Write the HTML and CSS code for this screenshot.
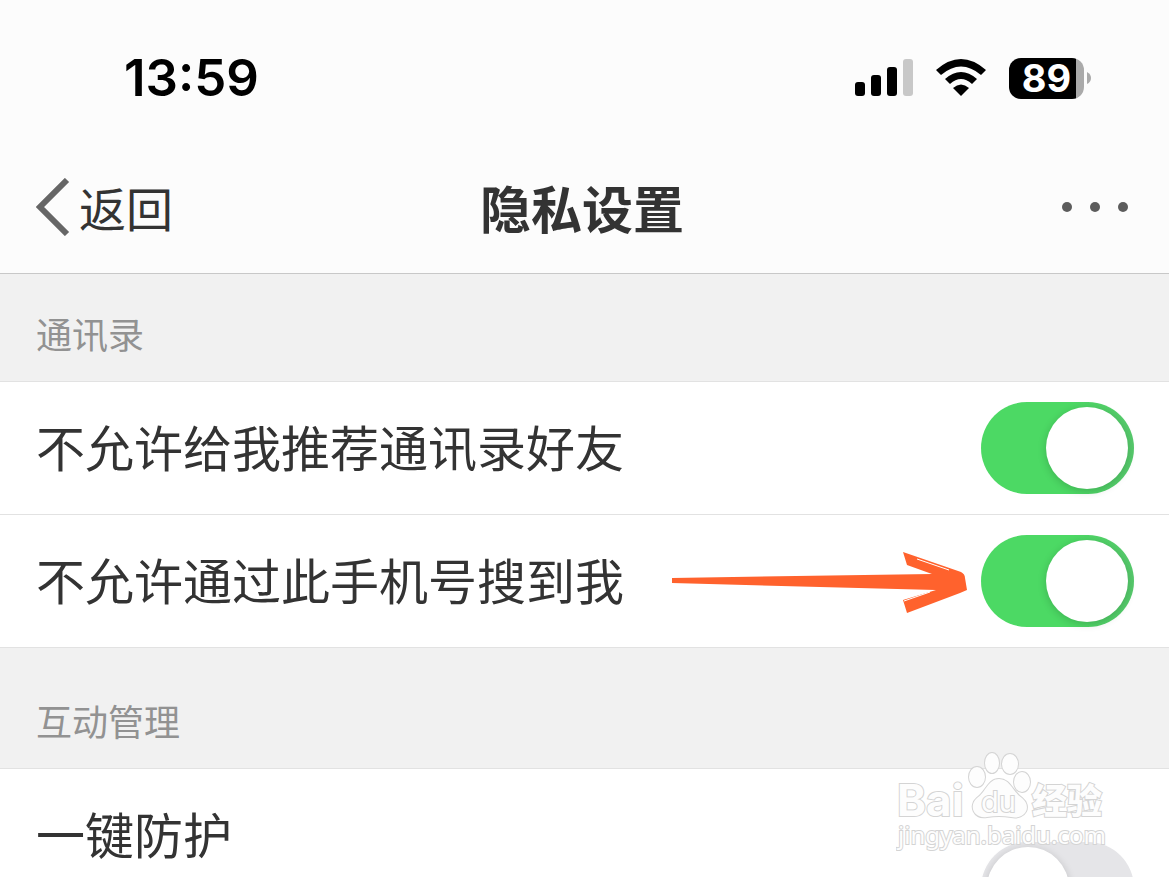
FILE: index.html
```html
<!DOCTYPE html>
<html lang="zh-CN">
<head>
<meta charset="utf-8">
<meta name="viewport" content="width=device-width, initial-scale=1">
<title>隐私设置</title>
<link rel="stylesheet" href="styles.css">
</head>
<body>
<div class="screen">
  <header class="header">
    <div class="status">
      <time class="clock">13:59</time>
      <div class="indicators">
        <svg class="signal" viewBox="0 0 58 38" aria-hidden="true">
          <rect x="0" y="23" width="10" height="14" rx="3"/>
          <rect x="16" y="16" width="10" height="21" rx="3"/>
          <rect x="32" y="8" width="10" height="29" rx="3"/>
          <rect class="muted" x="48" y="0" width="10" height="37" rx="3"/>
        </svg>
        <svg class="wifi" viewBox="0 0 50 38" aria-hidden="true">
          <path d="M0 11Q25-11 50 11L45 16Q25-1 5 16Z"/>
          <path d="M9 20Q25 6 41 20L36 25Q25 15 14 25Z"/>
          <path d="M17 29Q25 22 33 29L25 37Z"/>
        </svg>
        <div class="battery"><span class="battery-body">89</span><svg class="battery-cap" viewBox="0 0 4 12" aria-hidden="true"><path d="M0 0Q4 2 4 6T0 12Z"/></svg></div>
      </div>
    </div>
    <nav class="navbar">
      <button class="back" type="button">
        <svg class="chevron" viewBox="0 0 34 58" aria-hidden="true"><path d="M31 2L4 29L31 56"/></svg>
        <span>返回</span>
      </button>
      <h1 class="title">隐私设置</h1>
      <button class="more" type="button" aria-label="更多">
        <svg class="dots" viewBox="0 0 66 10" aria-hidden="true"><circle cx="5" cy="5" r="5"/><circle cx="33" cy="5" r="5"/><circle cx="61" cy="5" r="5"/></svg>
      </button>
    </nav>
  </header>
  <main>
    <h2 class="group">通讯录</h2>
    <div class="row">
      <label class="label" for="recommend">不允许给我推荐通讯录好友</label>
      <input class="switch" id="recommend" type="checkbox" role="switch" checked>
    </div>
    <div class="row">
      <label class="label" for="search">不允许通过此手机号搜到我</label>
      <svg class="arrow" viewBox="0 0 296 62" aria-hidden="true">
        <path d="M0 26L260 22L235 13L231 0L289 20Q293 22 293 26L295 38L288 41L235 61L231 48L264 38L0 31Z"/>
        <path class="scratch" d="M245 7L277 18M232 49L258 40"/>
      </svg>
      <input class="switch" id="search" type="checkbox" role="switch" checked>
    </div>
    <h2 class="group group-tall">互动管理</h2>
    <div class="row row-tall">
      <label class="label" for="protect">一键防护</label>
      <input class="switch" id="protect" type="checkbox" role="switch">
    </div>
  </main>
  <svg class="watermark" viewBox="0 0 214 106" aria-label="Baidu经验">
    <g class="outline">
      <text class="brand" x="1" y="65">Bai</text>
      <ellipse cx="81" cy="26" rx="8" ry="10"/>
      <ellipse cx="96" cy="12" rx="7" ry="10"/>
      <ellipse cx="114" cy="13" rx="8" ry="10"/>
      <ellipse cx="126" cy="31" rx="8" ry="10"/>
      <path d="M103 28C92 28 90 41 81 47C72 55 78 68 91 66Q103 64 115 66C130 69 136 55 126 47C116 40 114 28 103 28Z"/>
      <text class="du" x="85" y="61">du</text>
      <text class="word" x="136" y="63">经验</text>
      <text class="site" x="2" y="93">jingyan.baidu.com</text>
    </g>
  </svg>
</div>
</body>
</html>
```
FILE: styles.css
```css
* { box-sizing: border-box; }
body {
  margin: 0;
  background: #fff;
  color: #333;
  font-family: "Noto Sans CJK SC", sans-serif;
}
button {
  padding: 0;
  border: 0;
  background: none;
  color: inherit;
  font: inherit;
}
svg { display: block; }
.screen {
  position: relative;
  height: 100vh;
  overflow: hidden;
}
.header {
  background: #fcfcfc;
  border-bottom: 1px solid #c8c8c8;
}
.status {
  display: flex;
  align-items: center;
  justify-content: space-between;
  height: 142px;
  padding: 14px 78px 0 124px;
}
.clock {
  color: #000;
  font: 600 51px/60px Inter, sans-serif;
}
.indicators {
  display: flex;
  align-items: center;
  gap: 23px;
}
.signal { width: 58px; height: 38px; }
.signal .muted { fill: #c8c8c8; }
.wifi { width: 50px; height: 38px; }
.battery {
  display: flex;
  align-items: center;
  gap: 3px;
}
.battery-body {
  width: 75px;
  border-radius: 12px;
  background: linear-gradient(90deg, #000 67px, #aaa 67px);
  color: #fff;
  font: 700 38px/41px Inter, sans-serif;
  text-align: center;
}
.battery-cap {
  width: 4px;
  height: 12px;
  fill: #aaa;
}
.navbar {
  display: grid;
  grid-template-columns: 1fr auto 1fr;
  align-items: center;
  height: 131px;
  padding: 0 41px 2px 36px;
}
.back {
  display: flex;
  align-items: center;
  justify-self: start;
  gap: 9px;
  font-size: 47px;
  line-height: 64px;
}
.chevron {
  width: 34px;
  height: 58px;
  fill: none;
  stroke: #666;
  stroke-width: 6;
}
.title {
  margin: 0;
  font-size: 51px;
  font-weight: 700;
  line-height: 68px;
}
.more { justify-self: end; }
.dots {
  width: 66px;
  height: 10px;
  fill: #5c5c5c;
}
.group {
  display: flex;
  align-items: flex-end;
  height: 108px;
  margin: 0;
  padding: 0 36px 22px;
  border-bottom: 1px solid #e2e2e2;
  background: #f1f1f1;
  color: #929292;
  font-size: 36px;
  font-weight: 400;
  line-height: 52px;
}
.group-tall { height: 121px; }
.row {
  position: relative;
  display: flex;
  align-items: center;
  justify-content: space-between;
  height: 133px;
  padding: 0 35px 0 36px;
  border-bottom: 1px solid #e2e2e2;
  background: #fff;
}
.row-tall { height: 238px; }
.label {
  padding-bottom: 4px;
  font-size: 49px;
  line-height: 72px;
}
.row-tall .label {
  align-self: flex-start;
  margin-top: 28px;
}
.switch {
  appearance: none;
  flex: none;
  width: 153px;
  height: 92px;
  margin: 0;
  padding: 5px 6px;
  border-radius: 46px;
  background: #e5e5e8;
}
.switch::before {
  content: "";
  display: block;
  width: 82px;
  height: 82px;
  border-radius: 50%;
  background: #fff;
  box-shadow: 0 2px 8px rgba(0, 0, 0, 0.18);
}
.switch:checked { background: linear-gradient(90deg, #4cd964 60%, #56c96c); }
.switch:checked::before { margin-left: auto; }
.arrow {
  position: absolute;
  top: 37px;
  right: 201px;
  width: 296px;
  height: 62px;
  fill: #ff622d;
}
.arrow .scratch {
  fill: none;
  stroke: #fff;
  stroke-width: 1;
}
.watermark {
  position: absolute;
  right: 59px;
  bottom: 20px;
  width: 214px;
  height: 106px;
}
.outline {
  fill: #fdfdfd;
  stroke: #d4d4d4;
  stroke-width: 2;
  paint-order: stroke;
}
.brand { font: 700 44px Inter, sans-serif; }
.du { font: 400 29px Inter, sans-serif; }
.word { font: 900 35px "Noto Sans CJK SC", sans-serif; }
.site { font: 400 24px "Noto Sans", sans-serif; }
```
